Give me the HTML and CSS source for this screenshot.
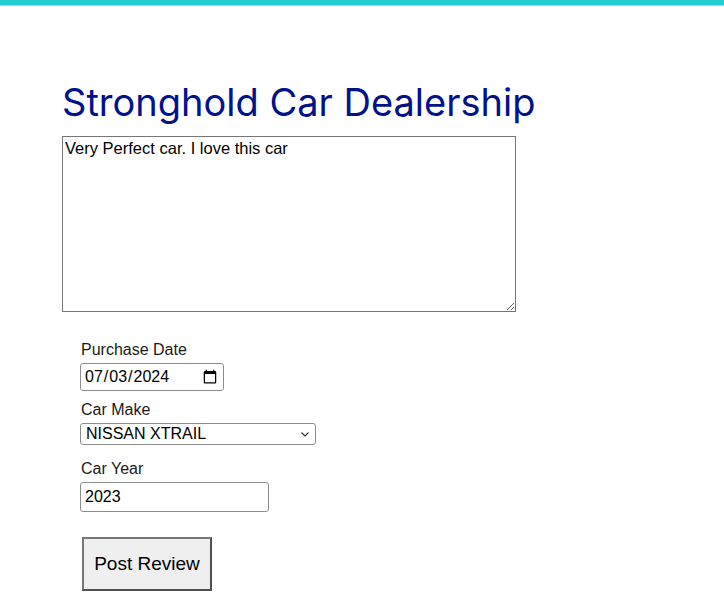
FILE: index.html
```html
<!DOCTYPE html>
<html lang="en">
<head>
<meta charset="utf-8">
<title>Stronghold Car Dealership</title>
<link rel="stylesheet" href="styles.css">
</head>
<body>
<div class="topbar"></div>
<main class="page">
  <h1 class="title">Stronghold Car Dealership</h1>
  <textarea class="review" rows="10" cols="50">Very Perfect car. I love this car</textarea>
  <div class="fields">
    <div class="field">
      <label class="label" for="pdate">Purchase Date</label>
      <input class="date" id="pdate" type="date" value="2024-07-03">
    </div>
    <div class="field field-make">
      <label class="label" for="make">Car Make</label>
      <div class="select-wrap">
        <select class="make" id="make">
          <option>NISSAN XTRAIL</option>
        </select>
        <svg class="chevron" width="8" height="5" viewBox="0 0 8 5" aria-hidden="true">
          <path d="M0.5 0.5 L4 4 L7.5 0.5" fill="none" stroke="#333" stroke-width="1.1"/>
        </svg>
      </div>
    </div>
    <div class="field">
      <label class="label" for="year">Car Year</label>
      <input class="year" id="year" type="text" value="2023">
    </div>
    <div class="actions">
      <button class="post" type="button">Post Review</button>
    </div>
  </div>
</main>
</body>
</html>
```

FILE: styles.css
```css
html, body {
  margin: 0;
  padding: 0;
  background: #ffffff;
  font-family: "Liberation Sans", Arial, sans-serif;
  color: #111;
}

.topbar {
  height: 5px;
  background: #22ced3;
  border-bottom: 1px solid #7fe3e3;
}

.page {
  display: flex;
  flex-direction: column;
  align-items: flex-start;
  padding: 76px 0 0 62px;
}

.title {
  margin: 0;
  font-family: Inter, "Liberation Sans", sans-serif;
  font-size: 38px;
  font-weight: 400;
  line-height: 41px;
  color: #00128c;
}

.review {
  box-sizing: border-box;
  margin-top: 13px;
  width: 454px;
  height: 176px;
  padding: 2px 2px;
  border: 1px solid #767676;
  border-radius: 0;
  font-family: "Liberation Sans", Arial, sans-serif;
  font-size: 16.5px;
  line-height: 19px;
  color: #000;
}

.fields {
  display: flex;
  flex-direction: column;
  align-items: flex-start;
  padding: 29px 0 0 18px;
  gap: 10px;
}

.field {
  display: flex;
  flex-direction: column;
  align-items: flex-start;
  gap: 4px;
}

.field-make {
  margin-bottom: 5px;
}

.label {
  font-size: 16px;
  line-height: 18px;
  padding-left: 1px;
  color: #1a1a1a;
}

.date, .make, .year {
  box-sizing: border-box;
  margin: 0;
  font-family: "Liberation Sans", Arial, sans-serif;
  font-size: 16px;
  color: #000;
  border: 1px solid #8d8d8d;
  border-radius: 3px;
  background: #fff;
}

.date {
  width: 144px;
  height: 28px;
  padding: 0 3px;
}

.select-wrap {
  position: relative;
  display: flex;
}

.make {
  -webkit-appearance: none;
  appearance: none;
  width: 236px;
  height: 22px;
  padding: 0 20px 0 5px;
  line-height: 20px;
}

.chevron {
  position: absolute;
  right: 7px;
  top: 9px;
  pointer-events: none;
}

.year {
  width: 189px;
  height: 30px;
  padding: 0 4px;
}

.actions {
  padding-top: 15px;
  padding-left: 2px;
}

.post {
  box-sizing: border-box;
  width: 130px;
  height: 54px;
  padding: 0;
  font-family: "Liberation Sans", Arial, sans-serif;
  font-size: 19px;
  color: #000;
  background: #efefef;
  border: 2px solid #4f4f4f;
  border-top-color: #777;
  border-left-color: #777;
  border-radius: 0;
}
```
